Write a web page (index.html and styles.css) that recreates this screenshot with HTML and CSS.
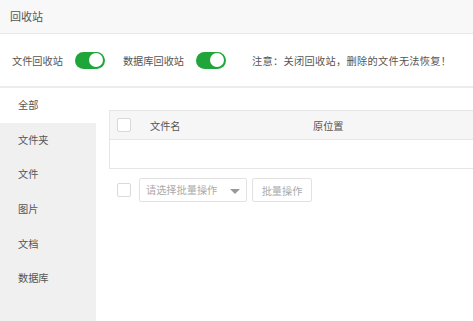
FILE: index.html
```html
<!DOCTYPE html>
<html lang="zh">
<head>
  <meta charset="UTF-8">
  <title>回收站</title>
  <link rel="stylesheet" href="styles.css">
</head>
<body>
  <div class="head">回收站</div>
  <div class="switches">
    <span class="sw-label">文件回收站</span>
    <span class="toggle on"><i></i></span>
    <span class="sw-label sw-db">数据库回收站</span>
    <span class="toggle on"><i></i></span>
    <span class="note">注意：关闭回收站，删除的文件无法恢复！</span>
  </div>
  <div class="main">
    <ul class="side">
      <li class="active">全部</li>
      <li>文件夹</li>
      <li>文件</li>
      <li>图片</li>
      <li>文档</li>
      <li>数据库</li>
    </ul>
    <div class="content">
      <div class="table">
        <div class="row thead">
          <span class="check"></span>
          <span class="col-name">文件名</span>
          <span class="col-path">原位置</span>
        </div>
        <div class="row empty"></div>
      </div>
      <div class="batch">
        <span class="check"></span>
        <div class="select">请选择批量操作<span class="caret"></span></div>
        <button class="btn">批量操作</button>
      </div>
    </div>
  </div>
</body>
</html>
```

FILE: styles.css
```css
html, body { margin: 0; height: 100%; overflow: hidden; }
body { font-family: "Noto Sans CJK SC", "Liberation Sans", sans-serif; font-size: 10.2px; color: #555; background: #fff; white-space: nowrap; }
.head { height: 33px; line-height: 33px; padding-left: 10px; background: #f8f8f8; border-bottom: 1px solid #e8e8e8; color: #555; font-size: 11px; }
.switches { height: 52px; display: flex; align-items: center; padding-left: 12px; border-bottom: 2px solid #ececec; color: #555; }
.switches > * { flex: none; }
.sw-label { margin-right: 12px; }
.sw-db { margin-left: 18px; margin-right: 12px; }
.toggle { width: 30px; height: 17px; border-radius: 9px; background: #20a53a; position: relative; display: inline-block; }
.toggle i { position: absolute; right: 2px; top: 1.5px; width: 14px; height: 14px; border-radius: 50%; background: #fff; }
.note { margin-left: 26px; color: #555; letter-spacing: 0.3px; }
.main { display: flex; height: 240px; }
.side { list-style: none; margin: 0; padding: 0; width: 96px; flex: none; background: #f0f0f0; }
.side li { height: 34.7px; line-height: 34.7px; padding-left: 18px; color: #555; }
.side li.active { background: #fff; }
.content { flex: 1; padding: 22px 0 0 13px; overflow: hidden; }
.table { width: 110%; border: 1px solid #e6e6e6; border-right: none; }
.row { height: 28px; display: flex; align-items: center; }
.thead { background: #f6f6f6; border-bottom: 1px solid #e6e6e6; color: #555; }
.check { width: 12px; height: 12px; border: 1px solid #d9d9d9; border-radius: 2px; background: #fff; margin-left: 7px; flex: none; }
.col-name { margin-left: 19px; width: 163px; flex: none; }
.batch { display: flex; align-items: center; margin-top: 9px; }
.batch .check { margin-left: 8px; margin-right: 8px; }
.select { width: 100px; height: 22px; line-height: 22px; border: 1px solid #e2e2e2; border-radius: 2px; padding-left: 6px; color: #aaa; position: relative; margin-right: 5px; flex: none; }
.caret { position: absolute; right: 6px; top: 10px; border-left: 5px solid transparent; border-right: 5px solid transparent; border-top: 5px solid #999; }
.btn { height: 24px; width: 60px; border: 1px solid #e2e2e2; border-radius: 2px; background: #fff; color: #aaa; font: inherit; padding: 0; flex: none; }
```
